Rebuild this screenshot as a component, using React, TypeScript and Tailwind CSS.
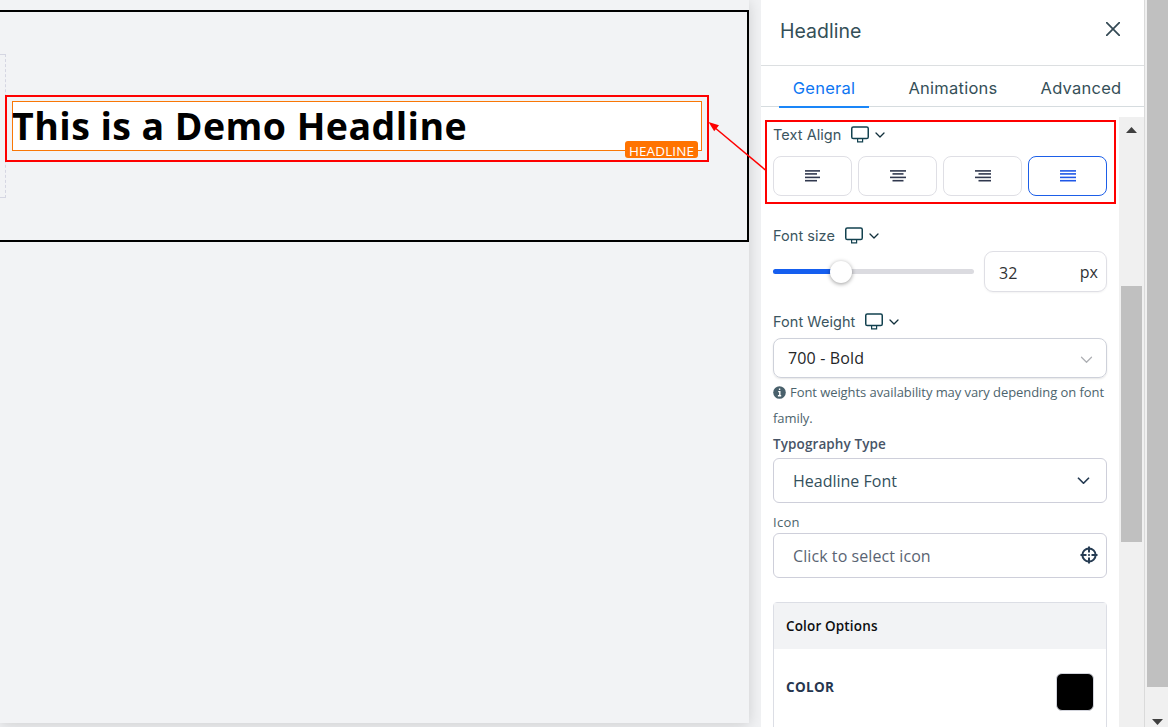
import { useState } from 'react'
import type { ReactNode } from 'react'

const alignments = [
  { id: 'left', rows: ['M0 .9h15', 'M0 3.9h12', 'M0 7.4h15', 'M0 10.7h12'] },
  { id: 'center', rows: ['M0 .9h16', 'M2.5 3.9h11', 'M0 7.4h16', 'M2.5 10.7h11'] },
  { id: 'right', rows: ['M0 .9h16', 'M3.5 3.9h12.5', 'M0 7.4h16', 'M3.5 10.7h12.5'] },
  { id: 'justify', rows: ['M0 .9h16', 'M0 3.9h16', 'M0 7.4h16', 'M0 10.7h16'] },
]

const tabs = [
  { name: 'General', box: 'w-[90px]' },
  { name: 'Animations', box: 'w-[92px] ml-[38px]' },
  { name: 'Advanced', box: 'w-[84px] ml-[40px]' },
]

function Chevron({ className, size = 10, width = 1.3 }: { className?: string; size?: number; width?: number }) {
  return (
    <svg className={className} width={size} height={size / 2 + 1} viewBox="0 0 10 6" fill="none" stroke="currentColor" strokeWidth={width}>
      <path d="M1 1l4 4 4-4" strokeLinecap="round" strokeLinejoin="round" />
    </svg>
  )
}

function Monitor() {
  return (
    <svg width="18" height="17" viewBox="0 0 18 17" fill="none" stroke="#12414f" strokeWidth="1.5">
      <rect x=".75" y=".9" width="16.5" height="11.6" rx="1.6" />
      <path d="M6.6 12.6v3.2h5v-3.2" strokeWidth="1.2" />
    </svg>
  )
}

function ResponsiveLabel({ children, className }: { children: ReactNode; className: string }) {
  return (
    <div className={`flex items-center font-[Inter,sans-serif] text-[14.5px] leading-5 text-[#3b5560] ${className}`}>
      <span className="whitespace-nowrap tracking-[0.05px]">{children}</span>
      <span className="-mt-px ml-[10px]"><Monitor /></span>
      <Chevron className="ml-[6px] text-[#12303c]" />
    </div>
  )
}

function Canvas() {
  return (
    <main className="relative h-full w-[761px] shrink-0 overflow-hidden bg-[#f1f2f4]">
      <div className="h-[723px] w-[749px] bg-[#f2f3f5] pt-[10px] shadow-[0_2px_14px_rgba(0,0,0,0.15)]">
        <section className="h-[232px] border-y-2 border-r-2 border-black pt-[42px]">
          <div className="h-[144px] w-[6px] border-y border-r border-dashed border-[#d5d6e2]" />
        </section>
      </div>
      {/* selected element */}
      <div className="absolute left-[5px] top-[95px] h-[67px] w-[704px] border-2 border-[#fe0000] bg-[#f2f3f5] p-[4px_5px]">
        <div className="relative h-[50px] w-[690px] border border-[#f97706] bg-white">
          <h1 className="-ml-px whitespace-nowrap font-['Open_Sans',sans-serif] text-[37.5px] font-bold leading-[47px] tracking-[0.44px] text-black">
            This is a Demo Headline
          </h1>
          <span className="absolute -bottom-[8px] right-[3px] flex h-[17px] w-[73px] items-center justify-center rounded-[3px] bg-[#ff7300] pt-[3px] font-['Open_Sans',sans-serif] text-[13.5px] leading-4 tracking-[0.1px] text-white">
            HEADLINE
          </span>
        </div>
      </div>
    </main>
  )
}

function Header() {
  const [active, setActive] = useState('General')
  return (
    <header className="font-[Inter,sans-serif] text-[#354f58]">
      <div className="flex h-[66px] items-start justify-between border-b border-[#dcdfe1] pl-[19px] pr-[24px] pt-[20px]">
        <h2 className="text-[19.5px] leading-[23px]">Headline</h2>
        <svg className="mt-[2px]" width="14" height="14" viewBox="0 0 14 14" stroke="#344954" strokeWidth="1.7" fill="none">
          <path d="M.7.7l12.6 12.6M13.3.7L.7 13.3" strokeLinecap="round" />
        </svg>
      </div>
      <nav className="flex h-[41px] border-b border-[#d6dcdf] pl-[18px]">
        {tabs.map(tab => (
          <button
            key={tab.name}
            onClick={() => setActive(tab.name)}
            className={`h-[42px] whitespace-nowrap border-b-2 pt-[4px] text-[16.5px] tracking-[0.25px] ${tab.box} ${
              active === tab.name ? 'border-[#1a86f8] text-[#0d76f2]' : 'border-transparent'
            }`}
          >
            {tab.name}
          </button>
        ))}
      </nav>
    </header>
  )
}

function Settings() {
  const [align, setAlign] = useState('justify')
  return (
    <div className="w-[358px] overflow-hidden pl-3 pr-[12px] pt-[18px] font-['Open_Sans',sans-serif]">
      <ResponsiveLabel className="h-5">Text Align</ResponsiveLabel>
      <div className="mt-[11px] flex gap-[6px]">
        {alignments.map(item => (
          <button
            key={item.id}
            onClick={() => setAlign(item.id)}
            className={`flex h-10 w-[79px] items-center justify-center rounded-lg border pl-px ${
              align === item.id ? 'border-[#1d5fe8] text-[#1f57e7]' : 'border-[#dfdfe5] text-[#30384e]'
            }`}
          >
            <svg width="16" height="12" viewBox="0 0 16 12" stroke="currentColor" strokeWidth="1.6">
              {item.rows.map(d => <path key={d} d={d} />)}
            </svg>
          </button>
        ))}
      </div>

      <ResponsiveLabel className="mt-[30px] h-5">Font size</ResponsiveLabel>
      <div className="mt-[5px] flex h-[41px] items-center gap-[10px]">
        <div className="flex h-[5px] w-[201px] items-center rounded-full bg-[#dbdbe0]">
          <div className="h-[5px] w-[62px] rounded-l-full bg-[#155eef]" />
          <div className="-ml-[5px] size-[22px] rounded-full bg-white shadow-[0_1px_4px_rgba(0,0,0,0.4)]" />
        </div>
        <div className="flex h-[41px] w-[123px] items-center justify-between rounded-[9px] border border-[#dfdfe5] pl-[14px] pr-[8px] pt-[2px] text-[16px] text-[#303234] shadow-[0_1px_2px_rgba(0,0,0,0.05)]">
          <span>32</span>
          <span className="-mt-px">px</span>
        </div>
      </div>

      <ResponsiveLabel className="mt-[20px] h-5">Font Weight</ResponsiveLabel>
      <div className="mt-[6px] flex h-10 items-center justify-between rounded-lg border border-[#ced1da] pl-[14px] pr-[13px] text-[16px] text-[#242628] shadow-[0_1px_2px_rgba(0,0,0,0.1)]">
        <span className="whitespace-nowrap tracking-[0.15px]">700 - Bold</span>
        <Chevron className="mt-[4px] text-[#aeb0b4]" size={13} width={1} />
      </div>
      <p className="mt-px whitespace-nowrap text-[13px] leading-[26px] tracking-[-0.07px] text-[#4d646d]">
        <svg className="mr-1 inline align-[-2px]" width="13" height="13" viewBox="0 0 13 13">
          <circle cx="6.5" cy="6.5" r="6.3" fill="#49606b" />
          <path d="M5.2 5.6h1.6v4M4.9 9.7h3.3M5.9 3.2h1.4" stroke="white" strokeWidth="1.4" fill="none" />
        </svg>
        <span>Font weights availability may vary depending on font</span>
        <br />
        family.
      </p>

      <div className="mb-px text-[13.5px] font-semibold leading-[26px] tracking-[0.1px] text-[#475467]">Typography Type</div>
      <div className="flex h-[45px] items-center justify-between rounded-md border border-[#cecfda] pl-[19px] pr-[16px] text-[16px] text-[#34505c]">
        <span>Headline Font</span>
        <Chevron className="text-[#263c53]" size={13} width={1.4} />
      </div>

      <div className="mt-[9px] h-[21px] text-[13px] leading-[20px] tracking-[0.3px] text-[#4d646d]">Icon</div>
      <div className="flex h-[45px] items-center justify-between rounded-md border border-[#cecfda] pl-[19px] pr-[8px] text-[16px] text-[#5a6473]">
        <span className="tracking-[0.08px]">Click to select icon</span>
        <svg className="-mt-[2px]" width="18" height="18" viewBox="0 0 18 18" fill="none" stroke="#263c53" strokeWidth="2">
          <circle cx="9" cy="9" r="6.6" />
          <path d="M9 .5v6M9 11.5v6M.5 9h6M11.5 9h6" />
          <path d="M8.2 9h1.6" />
        </svg>
      </div>

      <section className="mt-6 h-[140px] rounded-t-sm border border-[#dcdee5]">
        <div className="flex h-[46px] items-center bg-[#f2f3f5] pl-3 pt-px text-[13.5px] font-semibold tracking-[0.15px] text-[#0d0e10]">
          Color Options
        </div>
        <div className="flex h-[86px] items-center justify-between pl-3 pr-[12px] text-[13.5px] font-bold text-[#26364f]">
          <span className="-mt-[9px] tracking-[0.35px]">COLOR</span>
          <span className="-mt-px size-[38px] rounded-[6px] border border-[#d2d4dc] bg-black" />
        </div>
      </section>
    </div>
  )
}

export default function App() {
  return (
    <div className="relative flex h-[727px] w-[1168px] overflow-hidden bg-[#f0f0f0]">
      <Canvas />
      <aside className="flex w-[384px] shrink-0 flex-col border-r border-[#dadada] bg-white">
        <Header />
        <div className="flex min-h-0 flex-1">
          <Settings />
          {/* panel scrollbar */}
          <div className="mt-[10px] w-[25px] bg-[#f0f0f0] pl-[2px]">
            <div className="flex h-[169px] w-[21px] justify-center pt-[10px]">
              <svg width="11" height="6" viewBox="0 0 11 6"><path d="M0 6L5.5 0 11 6z" fill="#404040" /></svg>
            </div>
            <div className="h-[256px] w-[21px] bg-[#c0c0c0]" />
          </div>
        </div>
      </aside>
      {/* page scrollbar */}
      <div className="flex w-[23px] flex-col items-center pl-[2px]">
        <div className="h-[687px] w-[21px] bg-[#c0c0c0]" />
        <svg className="mt-[32px]" width="11" height="6" viewBox="0 0 11 6"><path d="M0 0h11L5.5 6z" fill="#404040" /></svg>
      </div>

      {/* callout */}
      <div className="pointer-events-none absolute left-[765px] top-[120px] h-[84px] w-[351px] border-2 border-[#fe0000]" />
      <svg className="pointer-events-none absolute left-[708px] top-[121px]" width="58" height="51" viewBox="0 0 58 51">
        <path d="M6 6l52 43.5" stroke="#fe0000" strokeWidth="1.5" />
        <path d="M.5 1l10.5 3.2-4.8 6z" fill="#fe0000" />
      </svg>
    </div>
  )
}
